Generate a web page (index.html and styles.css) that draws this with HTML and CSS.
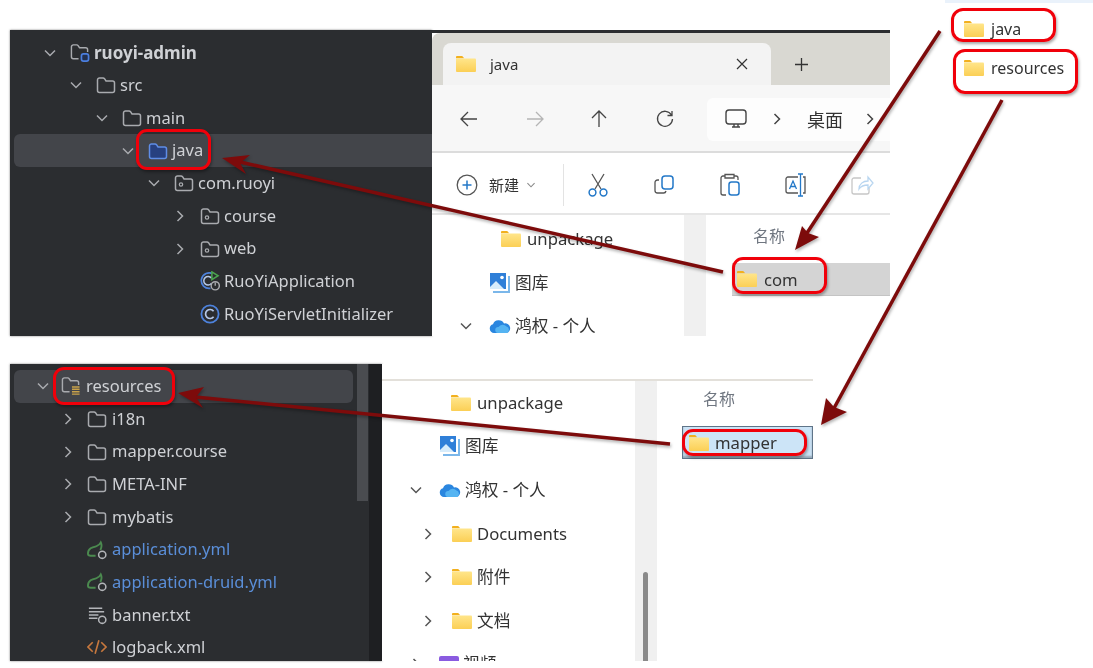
FILE: index.html
```html
<!DOCTYPE html>
<html lang="zh-CN">
<head>
<meta charset="utf-8">
<title>ruoyi resources</title>
<link rel="stylesheet" href="styles.css">
</head>
<body>
<svg class="defs" width="0" height="0" aria-hidden="true">
  <defs>
    <linearGradient id="fg" x1="0" y1="0" x2="0" y2="1"><stop offset="0" stop-color="#ffe58a"/><stop offset="1" stop-color="#fbcf55"/></linearGradient>
    <symbol id="yf" viewBox="0 0 20 16"><path d="M0 1.2C0 .5.5 0 1.2 0h5l2 2.2H0z" fill="#f2b01e"/><path d="M0 2.6h19a1 1 0 0 1 1 1V15a1 1 0 0 1-1 1H1a1 1 0 0 1-1-1z" fill="url(#fg)"/></symbol>
    <symbol id="tf" viewBox="0 0 20 18"><path d="M1.5 4a2 2 0 0 1 2-2h3.6c.6 0 1 .2 1.4.7L10 5h6.5a2 2 0 0 1 2 2v7.5a2 2 0 0 1-2 2h-13a2 2 0 0 1-2-2z" fill="none" stroke="#a9abaf" stroke-width="1.5"/></symbol>
    <symbol id="pf" viewBox="0 0 20 18"><path d="M1.5 4a2 2 0 0 1 2-2h3.6c.6 0 1 .2 1.4.7L10 5h6.5a2 2 0 0 1 2 2v7.5a2 2 0 0 1-2 2h-13a2 2 0 0 1-2-2z" fill="none" stroke="#a9abaf" stroke-width="1.5"/><circle cx="7" cy="10.5" r="1.7" fill="none" stroke="#a9abaf" stroke-width="1.2"/></symbol>
    <symbol id="jf" viewBox="0 0 20 18"><path d="M1.5 4a2 2 0 0 1 2-2h3.6c.6 0 1 .2 1.4.7L10 5h6.5a2 2 0 0 1 2 2v7.5a2 2 0 0 1-2 2h-13a2 2 0 0 1-2-2z" fill="#27407f" stroke="#5f8de6" stroke-width="1.5"/></symbol>
    <symbol id="mf" viewBox="0 0 21 20"><path d="M1.5 3.5a2 2 0 0 1 2-2h3.6c.6 0 1 .2 1.4.7L10 4.5h6.5a2 2 0 0 1 2 2V9M9 16H3.5a2 2 0 0 1-2-2V3.5" fill="none" stroke="#a9abaf" stroke-width="1.5"/><rect x="12" y="11" width="7.5" height="7.5" rx="2.2" fill="#22304f" stroke="#4b7fe0" stroke-width="1.8"/></symbol>
    <symbol id="rf" viewBox="0 0 21 20"><path d="M1.5 3.5a2 2 0 0 1 2-2h3.6c.6 0 1 .2 1.4.7L10 4.5h6.5a2 2 0 0 1 2 2V9M9 16H3.5a2 2 0 0 1-2-2V3.5" fill="none" stroke="#a9abaf" stroke-width="1.5"/><path d="M11.500 11h8M11.500 13.500h8M11.500 16h8M11.500 18.500h8" stroke="#c9a24a" stroke-width="1.5"/></symbol>
    <symbol id="cls" viewBox="0 0 20 20"><circle cx="10" cy="10" r="8.6" fill="none" stroke="#4d82dc" stroke-width="1.8"/><path d="M13.6 7.2a4.5 4.5 0 1 0 0 5.6" fill="none" stroke="#b5c8e8" stroke-width="1.7"/></symbol>
    <symbol id="app" viewBox="0 0 21 21"><path d="M14 3.2a8.2 8.2 0 1 0-3 15" fill="none" stroke="#4d82dc" stroke-width="1.8"/><path d="M12 7.4a4.5 4.5 0 1 0 0 5.6" fill="none" stroke="#b5c8e8" stroke-width="1.6"/><path d="M12.500 1l6.500 4-6.500 4z" fill="#2b2d30" stroke="#4ba44f" stroke-width="1.600"/><circle cx="16" cy="15.500" r="4.300" fill="#2b2d30" stroke="#a9abaf" stroke-width="1.500"/><path d="M16 12v3.400" stroke="#a9abaf" stroke-width="1.400"/></symbol>
    <symbol id="yml" viewBox="0 0 21 20"><path d="M1 14c0-6 5-7 9-8 2-.6 3.500-2 4.500-4 1.500 3 .5 6-.5 8M9 16H4c-2 0-3-1-3-2" fill="none" stroke="#4b8a4f" stroke-width="2"/><circle cx="16" cy="15" r="3.800" fill="#2b2d30" stroke="#b3b5b9" stroke-width="1.600"/></symbol>
    <symbol id="txt" viewBox="0 0 21 20"><path d="M2 3h14M2 6.500h16M2 10h10M2 13.500h9" stroke="#b3b5b9" stroke-width="1.500"/><circle cx="16" cy="15" r="3.800" fill="#2b2d30" stroke="#b3b5b9" stroke-width="1.600"/></symbol>
    <symbol id="xml" viewBox="0 0 21 18"><path d="M6 4L1 9l5 5M15 4l5 5-5 5M12.500 2L8.500 16" fill="none" stroke="#c7783e" stroke-width="1.700"/></symbol>
    <symbol id="pic" viewBox="0 0 22 22"><path d="M1 1h16v16H1z" fill="#2f7fd8"/><circle cx="13" cy="5.500" r="1.800" fill="#fff"/><path d="M1 15l6-6 8 8H1z" fill="#d7ecfb"/><path d="M19 4h2v17H4v-2h15z" fill="#7bb7ea"/></symbol>
    <symbol id="cloud" viewBox="0 0 22 14"><path d="M5 14a4.500 4.500 0 0 1-1-8.800A6 6 0 0 1 15 4.500a4.700 4.700 0 0 1 2.500 9.500z" fill="#2a86df"/><path d="M9 14a3 3 0 0 1 .5-6 5 5 0 0 1 8-.5A3.500 3.500 0 0 1 18 14z" fill="#55b4f2"/></symbol>
    <symbol id="cd" viewBox="0 0 14 14"><path d="M2 4.500l5 5 5-5" fill="none" stroke="currentColor" stroke-width="1.500"/></symbol>
    <symbol id="cr" viewBox="0 0 14 14"><path d="M4.500 2l5 5-5 5" fill="none" stroke="currentColor" stroke-width="1.500"/></symbol>
  </defs>
</svg>

<main class="canvas">

  <section class="ide ide-top">
    <div class="tree">
      <div class="row d0"><svg class="chev"><use href="#cd"/></svg><svg class="ico"><use href="#mf"/></svg><span class="bold">ruoyi-admin</span></div>
      <div class="row d1"><svg class="chev"><use href="#cd"/></svg><svg class="ico"><use href="#tf"/></svg><span>src</span></div>
      <div class="row d2"><svg class="chev"><use href="#cd"/></svg><svg class="ico"><use href="#tf"/></svg><span>main</span></div>
      <div class="row d3 hl"><svg class="chev"><use href="#cd"/></svg><svg class="ico"><use href="#jf"/></svg><span>java</span></div>
      <div class="row d4"><svg class="chev"><use href="#cd"/></svg><svg class="ico"><use href="#pf"/></svg><span>com.ruoyi</span></div>
      <div class="row d5"><svg class="chev"><use href="#cr"/></svg><svg class="ico"><use href="#pf"/></svg><span>course</span></div>
      <div class="row d5"><svg class="chev"><use href="#cr"/></svg><svg class="ico"><use href="#pf"/></svg><span>web</span></div>
      <div class="row d5"><i class="chev"></i><svg class="ico"><use href="#app"/></svg><span>RuoYiApplication</span></div>
      <div class="row d5"><i class="chev"></i><svg class="ico"><use href="#cls"/></svg><span>RuoYiServletInitializer</span></div>
    </div>
  </section>

  <section class="exp exp-top">
    <div class="tabbar">
      <div class="tab">
        <svg class="yf"><use href="#yf"/></svg><span class="tab-title">java</span>
        <svg class="tab-x" viewBox="0 0 12 12"><path d="M1 1l10 10M11 1L1 11" stroke="#333" stroke-width="1.200"/></svg>
      </div>
      <svg class="tab-plus" viewBox="0 0 12 12"><path d="M6 0v12M0 6h12" stroke="#333" stroke-width="1.200"/></svg>
    </div>
    <div class="navbar">
      <svg class="nav" viewBox="0 0 18 18"><path d="M17 9H1M8 2L1 9l7 7" fill="none" stroke="#444" stroke-width="1.300"/></svg>
      <svg class="nav nav-fwd" viewBox="0 0 18 18"><path d="M1 9h16M10 2l7 7-7 7" fill="none" stroke="#b5b5b5" stroke-width="1.300"/></svg>
      <svg class="nav" viewBox="0 0 18 18"><path d="M9 17V1M2 8l7-7 7 7" fill="none" stroke="#444" stroke-width="1.300"/></svg>
      <svg class="nav nav-last" viewBox="0 0 18 18"><path d="M15.500 5A7.500 7.500 0 1 0 16.500 9M16 1v4.500h-4.500" fill="none" stroke="#444" stroke-width="1.300"/></svg>
      <div class="addr">
        <svg class="mon" viewBox="0 0 22 20"><rect x="1" y="1" width="20" height="14" rx="3" fill="none" stroke="#444" stroke-width="1.400"/><path d="M7 18h8M9 15v3M13 15v3" stroke="#444" stroke-width="1.400"/></svg>
        <svg class="addr-chev"><use href="#cr"/></svg>
        <span class="addr-text">桌面</span>
        <svg class="addr-chev"><use href="#cr"/></svg>
      </div>
    </div>
    <div class="cmdbar">
      <svg class="plus" viewBox="0 0 22 22"><circle cx="11" cy="11" r="9.800" fill="none" stroke="#555" stroke-width="1.300"/><path d="M11 6.500v9M6.500 11h9" stroke="#2378c8" stroke-width="1.500"/></svg>
      <span class="new">新建</span>
      <svg class="new-chev"><use href="#cd"/></svg>
      <i class="sep"></i>
      <div class="cmds">
        <svg class="cmd" viewBox="0 0 22 24"><path d="M5 1l9 15M17 1L8 16" stroke="#555" stroke-width="1.300"/><circle cx="5.500" cy="19.500" r="3.400" fill="none" stroke="#2378c8" stroke-width="1.500"/><circle cx="16.500" cy="19.500" r="3.400" fill="none" stroke="#2378c8" stroke-width="1.500"/></svg>
        <svg class="cmd" viewBox="0 0 22 24"><rect x="9" y="3" width="11" height="13" rx="3" fill="none" stroke="#2378c8" stroke-width="1.500"/><path d="M6 7H4.500A2.500 2.500 0 0 0 2 9.500v8A2.500 2.500 0 0 0 4.500 20h6a2.500 2.500 0 0 0 2.500-2" fill="none" stroke="#555" stroke-width="1.300"/></svg>
        <svg class="cmd" viewBox="0 0 22 24"><path d="M6 3H4a2 2 0 0 0-2 2v15a2 2 0 0 0 2 2h3M15 3h2a2 2 0 0 1 2 2v2M6 1.500h9v3.500H6z" fill="none" stroke="#555" stroke-width="1.300"/><rect x="10" y="9" width="10" height="13" rx="2.500" fill="none" stroke="#2378c8" stroke-width="1.500"/></svg>
        <svg class="cmd" viewBox="0 0 24 24"><path d="M14 4H4a2 2 0 0 0-2 2v12a2 2 0 0 0 2 2h10M19 4h2v16h-2" fill="none" stroke="#555" stroke-width="1.300"/><path d="M5.500 16L9 8l3.500 8M6.700 13.500h4.600" fill="none" stroke="#2378c8" stroke-width="1.300"/><path d="M16.500 1v22M14 1h5M14 23h5" stroke="#2378c8" stroke-width="1.300" fill="none"/></svg>
        <svg class="cmd faded" viewBox="0 0 24 24"><path d="M11 5H4a2 2 0 0 0-2 2v12a2 2 0 0 0 2 2h13a2 2 0 0 0 2-2v-4" fill="none" stroke="#999" stroke-width="1.300"/><path d="M9 16c0-5 4-8 9-8V4l5 6-5 6v-4c-4 0-7 1-9 4z" fill="none" stroke="#7fb4e4" stroke-width="1.300"/></svg>
      </div>
    </div>
    <div class="body body-top">
      <div class="side">
        <div class="srow in3"><svg class="yf"><use href="#yf"/></svg><span>unpackage</span></div>
        <div class="srow in2"><i class="schev"></i><svg class="big"><use href="#pic"/></svg><span>图库</span></div>
        <div class="srow in1"><svg class="schev"><use href="#cd"/></svg><svg class="big cl"><use href="#cloud"/></svg><span>鸿权 - 个人</span></div>
      </div>
      <div class="gutter"></div>
      <div class="list">
        <div class="head">名称</div>
        <div class="item item-gray"><svg class="yf"><use href="#yf"/></svg><span>com</span></div>
      </div>
    </div>
  </section>

  <div class="patch">
    <div class="prow"><svg class="yf"><use href="#yf"/></svg><span>java</span></div>
    <div class="prow"><svg class="yf"><use href="#yf"/></svg><span>resources</span></div>
  </div>

  <section class="ide ide-bottom">
    <div class="tree">
      <div class="row b0 hl"><svg class="chev"><use href="#cd"/></svg><svg class="ico"><use href="#rf"/></svg><span>resources</span></div>
      <div class="row b1"><svg class="chev"><use href="#cr"/></svg><svg class="ico"><use href="#tf"/></svg><span>i18n</span></div>
      <div class="row b1"><svg class="chev"><use href="#cr"/></svg><svg class="ico"><use href="#tf"/></svg><span>mapper.course</span></div>
      <div class="row b1"><svg class="chev"><use href="#cr"/></svg><svg class="ico"><use href="#tf"/></svg><span>META-INF</span></div>
      <div class="row b1"><svg class="chev"><use href="#cr"/></svg><svg class="ico"><use href="#tf"/></svg><span>mybatis</span></div>
      <div class="row b1"><i class="chev"></i><svg class="ico"><use href="#yml"/></svg><span class="blue">application.yml</span></div>
      <div class="row b1"><i class="chev"></i><svg class="ico"><use href="#yml"/></svg><span class="blue">application-druid.yml</span></div>
      <div class="row b1"><i class="chev"></i><svg class="ico"><use href="#txt"/></svg><span>banner.txt</span></div>
      <div class="row b1"><i class="chev"></i><svg class="ico"><use href="#xml"/></svg><span>logback.xml</span></div>
    </div>
    <div class="thumb"></div>
  </section>

  <section class="exp exp-bottom">
    <div class="rule"></div>
    <div class="body body-bottom">
      <div class="side">
        <div class="srow in3"><svg class="yf"><use href="#yf"/></svg><span>unpackage</span></div>
        <div class="srow in2"><i class="schev"></i><svg class="big"><use href="#pic"/></svg><span>图库</span></div>
        <div class="srow in1"><svg class="schev"><use href="#cd"/></svg><svg class="big cl"><use href="#cloud"/></svg><span>鸿权 - 个人</span></div>
        <div class="srow in4"><svg class="schev"><use href="#cr"/></svg><svg class="yf"><use href="#yf"/></svg><span>Documents</span></div>
        <div class="srow in4"><svg class="schev"><use href="#cr"/></svg><svg class="yf"><use href="#yf"/></svg><span>附件</span></div>
        <div class="srow in4"><svg class="schev"><use href="#cr"/></svg><svg class="yf"><use href="#yf"/></svg><span>文档</span></div>
        <div class="srow in1"><svg class="schev"><use href="#cr"/></svg><i class="video"></i><span>视频</span></div>
      </div>
      <div class="gutter"><div class="gthumb"></div></div>
      <div class="list">
        <div class="head">名称</div>
        <div class="item item-blue"><svg class="yf"><use href="#yf"/></svg><span>mapper</span></div>
      </div>
    </div>
  </section>

  <svg class="arrows" viewBox="0 0 1093 668">
    <g fill="#7d0b0b">
      <path d="M723 272L240 162" stroke="#7d0b0b" stroke-width="3.500"/>
      <path d="M222 158L250 155 240 163 246 174z"/>
      <path d="M940 31L805 236" stroke="#7d0b0b" stroke-width="3.500"/>
      <path d="M795 250L802 226 808 233 819 237z"/>
      <path d="M1002 100L833 410" stroke="#7d0b0b" stroke-width="3.500"/>
      <path d="M821 425L826 398 834 407 847 412z"/>
      <path d="M670 444L195 397" stroke="#7d0b0b" stroke-width="3.500"/>
      <path d="M178 393L204 387 196 397 203 408z"/>
    </g>
  </svg>

  <i class="mark m-java"></i>
  <i class="mark m-com"></i>
  <i class="mark m-pjava"></i>
  <i class="mark m-pres"></i>
  <i class="mark m-res"></i>
  <i class="mark m-map"></i>
</main>
</body>
</html>
```

FILE: styles.css
```css
* { box-sizing: border-box; }
html, body { margin: 0; padding: 0; background: #fff; }
body { width: 1093px; height: 668px; overflow: hidden; font-family: "Noto Sans", "Noto Sans CJK SC", sans-serif; }
.defs { position: absolute; }
svg { display: block; flex: none; }
i { display: block; flex: none; }

.canvas { position: relative; width: 1093px; height: 668px; background: #fff; overflow: hidden; filter: blur(.7px); }

/* IDE panels */
.ide { position: absolute; background: #2b2d30; color: #cfd1d5; font-size: 16.500px; overflow: hidden; box-shadow: 0 0 2px rgba(0,0,0,.5); }
.ide-top { left: 10px; top: 30px; width: 422px; height: 306px; padding: 6.500px 0 0 4px; }
.ide-bottom { left: 10px; top: 364px; width: 372px; height: 297px; padding: 6px 29px 0 4px; }
.ide-bottom::after { content: ""; position: absolute; right: 0; top: 0; bottom: 0; width: 13px; background: #1e1f22; }
.thumb { position: absolute; right: 14px; top: 0; width: 11px; height: 137px; background: #4a4c50; }

.tree { display: flex; flex-direction: column; }
.row { display: flex; align-items: center; height: 32.650px; line-height: 1; white-space: nowrap; border-radius: 6px; color: #cfd1d5; }
.row.hl { background: #43454a; }
.ide-top .row.hl { border-radius: 6px 0 0 6px; }
.chev { width: 14px; height: 14px; color: #a9abaf; margin-right: 13px; }
.ico { width: 20px; height: 20px; margin-right: 4px; }
.bold { font-weight: 700; font-size: 17px; }
.blue { color: #5a8ed8; }

.d0 { padding-left: 29px; }
.d1 { padding-left: 55px; }
.d2 { padding-left: 81px; }
.d3 { padding-left: 107px; }
.d4 { padding-left: 133px; }
.d5 { padding-left: 159px; }
.b0 { padding-left: 22px; }
.b1 { padding-left: 47px; }
.b1 .chev { margin-right: 12px; }
.b0 .chev { margin-right: 11px; }
.ide-bottom .ico { margin-right: 5px; }

/* Explorer */
.exp { position: absolute; color: #333; font-size: 16.700px; overflow: hidden; background: #fff; }
.exp-top { left: 432px; top: 30px; width: 458px; height: 306px; border-top: 3px solid #2b2d30; }
.exp-bottom { left: 382px; top: 364px; width: 431px; height: 297px; }

.tabbar { display: flex; align-items: flex-end; height: 52px; background: #d9d8d2; border-radius: 8px 0 0 0; padding-left: 11px; }
.tab { display: flex; align-items: center; width: 328px; height: 42px; background: #f3f3f3; border-radius: 8px 8px 0 0; padding: 0 0 0 13px; }
.tab-title { margin-left: 14px; font-size: 15px; flex: 1; }
.tab-x { width: 12px; height: 12px; margin-right: 23px; }
.tab-plus { width: 13px; height: 13px; margin: 0 0 14px 24px; }

.navbar { display: flex; align-items: center; height: 68px; background: #f7f7f7; border-bottom: 2px solid #dcdcdc; padding: 2px 0 0 28px; }
.nav { width: 18px; height: 18px; margin-right: 48px; }
.nav-fwd { margin-right: 46px; }
.nav-last { margin-right: 33px; }
.addr { display: flex; align-items: center; width: 200px; height: 43px; background: #fdfdfd; border-radius: 6px; padding-left: 18px; flex: none; }
.mon { width: 22px; height: 20px; margin-right: 23px; }
.addr-chev { width: 14px; height: 14px; color: #444; }
.addr-text { margin: 0 20px 0 23px; font-size: 18px; }

.cmdbar { display: flex; align-items: center; height: 62px; background: #fff; border-bottom: 2px solid #e6e6e6; padding: 3px 0 0 24px; }
.plus { width: 22px; height: 22px; }
.new { margin-left: 11px; font-size: 15px; }
.new-chev { width: 10px; height: 10px; margin-left: 7px; color: #888; }
.sep { width: 1px; height: 42px; background: #e3e3e3; margin: 0 22px 0 27px; }
.cmds { display: flex; gap: 42px; }
.cmd { width: 24px; height: 24px; }
.faded { opacity: .55; }

.body { display: flex; }
.body-top { height: 121px; }
.body-bottom { height: 282px; }
.side { display: flex; flex-direction: column; flex: none; }
.body-top .side { width: 252px; padding-top: 2px; }
.body-bottom .side { width: 253px; }
.srow { display: flex; align-items: center; height: 43.600px; line-height: 1.2; white-space: nowrap; flex: none; }
.body-top .srow:first-child { height: 44px; }
.in3 { padding-left: 69px; }
.in2 { padding-left: 57px; }
.in1 { padding-left: 27px; }
.in4 { padding-left: 39px; }
.in3 .yf, .in4 .yf { margin-right: 6px; }
.yf { width: 20px; height: 16px; }
.schev { width: 14px; height: 14px; color: #555; margin-right: 16px; }
.in4 .schev { margin-right: 17px; }
.in4 .yf { margin-right: 5px; }
.in2 .schev { width: 0; margin: 0; }
.big { width: 22px; height: 22px; margin-right: 4px; }
.video { width: 20px; height: 16px; background: #8a5be0; border-radius: 2px; margin-right: 4px; }

.gutter { position: relative; width: 22px; background: #f0f0f0; flex: none; }
.gthumb { position: absolute; left: 8px; top: 191px; width: 5px; height: 100px; background: #8a8a8a; border-radius: 3px; }
.list { flex: 1; min-width: 0; }
.head { color: #6f7680; font-size: 16px; line-height: 1; }
.body-top .head { padding: 13px 0 0 47px; }
.body-bottom .head { padding: 10px 0 0 46px; }
.item { display: flex; align-items: center; height: 33px; padding-left: 5px; white-space: nowrap; }
.item span { margin-left: 7px; }
.item-gray { background: #d4d4d4; margin: 19px 0 0 26px; border-bottom: 1px solid #c4c4c4; }
.item-blue { background: #cce4f7; margin: 19px 0 0 25px; border: 1px solid #5f7488; box-shadow: inset 0 -2px 2px rgba(70,80,90,.4); padding-left: 6px; }
.item-blue span { margin-left: 6px; }

.rule { height: 2px; margin-top: 15px; background: #e3e0da; }

/* top-right patch */
.patch { position: absolute; left: 945px; top: 0; width: 148px; height: 100px; padding: 6px 0 0 19px; color: #333; font-size: 16px; border-top: 3px solid #eaf2fb; }
.prow { display: flex; align-items: center; height: 39px; white-space: nowrap; }
.prow span { margin-left: 7px; }

/* annotations */
.arrows { position: absolute; left: 0; top: 0; width: 1093px; height: 668px; pointer-events: none; filter: drop-shadow(1px 2px 1.500px rgba(0,0,0,.3)); }
.mark { position: absolute; border: 3.500px solid #f0000a; border-radius: 11px; box-shadow: 1px 2px 3px rgba(0,0,0,.35); }
.m-java { left: 136px; top: 129px; width: 75px; height: 41px; }
.m-com { left: 732px; top: 257px; width: 95px; height: 37px; }
.m-pjava { left: 951px; top: 8px; width: 105px; height: 34px; border-radius: 12px; }
.m-pres { left: 953px; top: 49px; width: 125px; height: 45px; border-radius: 12px; }
.m-res { left: 53px; top: 367px; width: 122px; height: 38px; }
.m-map { left: 682px; top: 429px; width: 125px; height: 27px; }
```
